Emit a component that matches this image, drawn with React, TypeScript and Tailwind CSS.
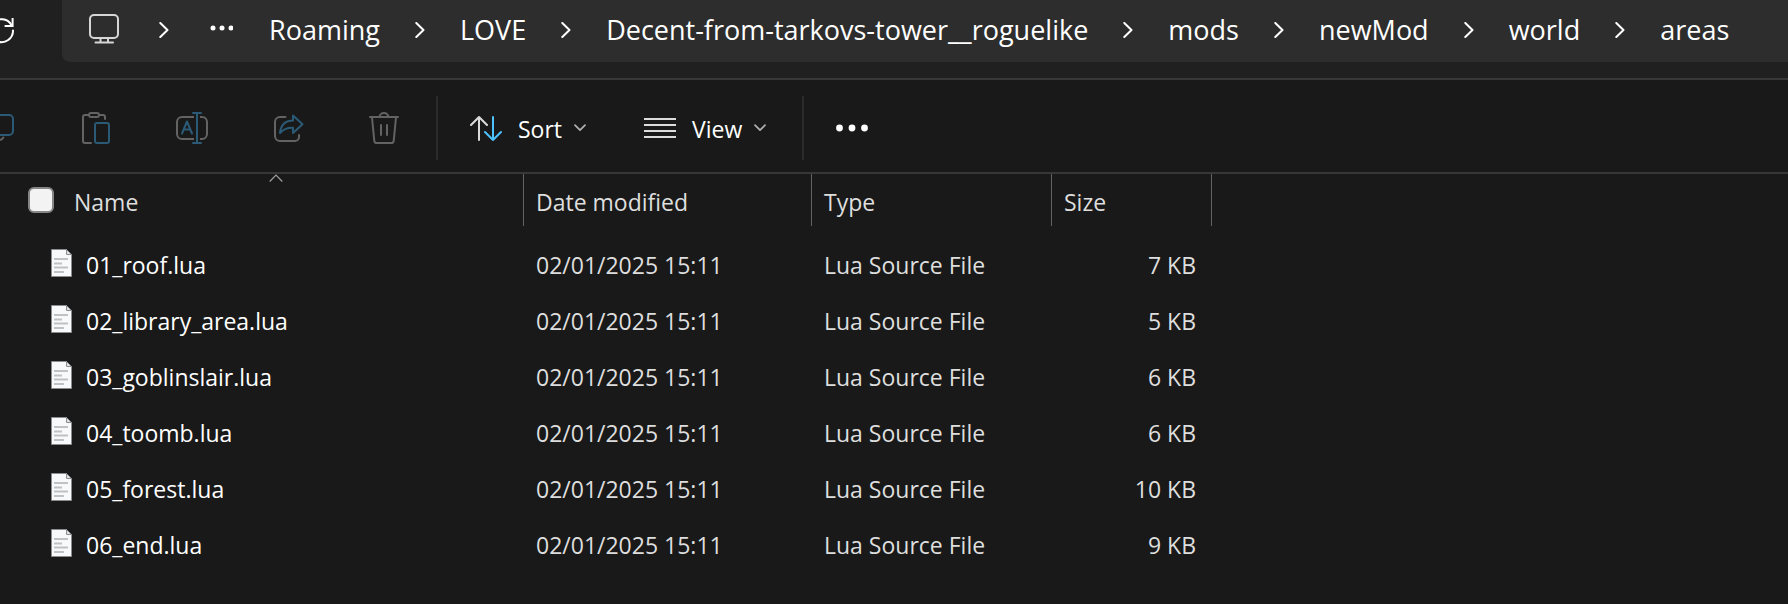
import React from "react";

type FileRow = { name: string; modified: string; type: string; size: string };

const files: FileRow[] = [
  { name: "01_roof.lua", modified: "02/01/2025 15:11", type: "Lua Source File", size: "7 KB" },
  { name: "02_library_area.lua", modified: "02/01/2025 15:11", type: "Lua Source File", size: "5 KB" },
  { name: "03_goblinslair.lua", modified: "02/01/2025 15:11", type: "Lua Source File", size: "6 KB" },
  { name: "04_toomb.lua", modified: "02/01/2025 15:11", type: "Lua Source File", size: "6 KB" },
  { name: "05_forest.lua", modified: "02/01/2025 15:11", type: "Lua Source File", size: "10 KB" },
  { name: "06_end.lua", modified: "02/01/2025 15:11", type: "Lua Source File", size: "9 KB" },
];

const crumbs = [
  "Roaming",
  "LOVE",
  "Decent-from-tarkovs-tower__roguelike",
  "mods",
  "newMod",
  "world",
  "areas",
];

const GREY = "#636363";
const BLUE = "#2b5a76";

function Icon({ children }: { children: React.ReactNode }) {
  return (
    <svg
      aria-hidden="true"
      className="size-8 shrink-0"
      viewBox="0 0 32 32"
      fill="none"
      strokeWidth="2"
      strokeLinecap="round"
      strokeLinejoin="round"
    >
      {children}
    </svg>
  );
}

function CrumbChevron() {
  return (
    <svg
      aria-hidden="true"
      className="h-4 w-2.5 shrink-0"
      viewBox="0 0 10 16"
      fill="none"
      stroke="#fff"
      strokeWidth="2"
      strokeLinecap="round"
      strokeLinejoin="round"
    >
      <path d="M1.3 1l7.2 7-7.2 7" />
    </svg>
  );
}

function DownChevron() {
  return (
    <svg
      aria-hidden="true"
      className="h-2 w-3 shrink-0"
      viewBox="0 0 12 8"
      fill="none"
      stroke="#b0b0b0"
      strokeWidth="1.7"
      strokeLinecap="round"
      strokeLinejoin="round"
    >
      <path d="M1 1.2l5 5 5-5" />
    </svg>
  );
}

function FileIcon() {
  return (
    <svg aria-hidden="true" className="h-7 w-[21px] shrink-0" viewBox="0 0 21 28" fill="none">
      <path d="M.5.5H15.5L20.5 5.5V27.5H.5z" fill="#f8f9fa" stroke="#8c8c8c" />
      <path d="M15.5.5V5.5H20.5z" fill="#dfe1e3" stroke="#8c8c8c" strokeLinejoin="round" />
      <path d="M3 10h14M3 14.5h8M3 18.500h14M3 23h10" stroke="#bfc1c4" strokeWidth="2" />
    </svg>
  );
}

export default function App() {
  return (
    <div className="min-h-screen overflow-hidden bg-[#191919] font-['Open_Sans','Noto_Sans',sans-serif] text-white">
      <header className="flex items-start overflow-hidden border-b-2 border-[#373737] bg-[#202020] pb-4">
        <button aria-label="Refresh" className="-ml-4 mt-3.5 mr-[46px] shrink-0">
          <Icon>
            <g stroke="#fff">
              <path d="M28.6 5v7h-7" strokeLinecap="square" strokeLinejoin="miter" />
              <path d="M27.500 11A11.500 11.500 0 1 0 29 16.500" />
            </g>
          </Icon>
        </button>
        <nav
          aria-label="Address"
          className="-mt-2 flex h-[70px] grow items-center rounded-l-lg bg-[#2d2d2d] pt-1.5 pl-[26px] text-[27px] leading-9"
        >
          <button aria-label="This PC">
            <Icon>
              <g stroke="#d6d6d6">
                <rect x="2" y="1" width="28" height="23" rx="4" />
                <path d="M7.500 28.500H25M12.500 24.500v4M20 24.500v4" />
              </g>
            </Icon>
          </button>
          <span className="ml-[39px] flex">
            <CrumbChevron />
          </span>
          <button aria-label="More folders" className="mr-9 ml-10">
            <svg className="h-5 w-6" viewBox="0 0 24 20" fill="#fff">
              <circle cx="4" cy="8" r="2.500" />
              <circle cx="13" cy="8" r="2.500" />
              <circle cx="22" cy="8" r="2.500" />
            </svg>
          </button>
          <ol className="flex items-center gap-[35px]">
            {crumbs.map((crumb, i) => (
              <li key={crumb} className="flex items-center gap-[35px]">
                {i > 0 && <CrumbChevron />}
                <button>{crumb}</button>
              </li>
            ))}
          </ol>
        </nav>
      </header>

      <div
        role="toolbar"
        aria-label="Commands"
        className="flex h-[94px] items-center border-b-2 border-[#373737] pt-1 text-[23px] leading-8"
      >
        <div className="-ml-4 flex shrink-0 gap-16">
          <button aria-label="Copy" disabled>
            <Icon>
              <rect x="8" y="3" width="21" height="20" rx="4" stroke={BLUE} />
              <path d="M4 9v14a5 5 0 0 0 5 5h6q3 0 4.300-2.500" stroke={GREY} />
            </Icon>
          </button>
          <button aria-label="Paste" disabled>
            <Icon>
              <g stroke={GREY}>
                <path d="M8.500 3H5a2 2 0 0 0-2 2v24a2 2 0 0 0 2 2h6M19.500 3H23a2 2 0 0 1 2 2v2" />
                <rect x="9" y="1" width="10" height="4" rx="2" />
              </g>
              <rect x="15" y="11" width="14" height="20" rx="2" stroke={BLUE} />
            </Icon>
          </button>
          <button aria-label="Rename" disabled>
            <Icon>
              <g stroke={GREY} strokeLinecap="butt">
                <path d="M18 5H6a5 5 0 0 0-5 5v12a5 5 0 0 0 5 5h12M24 5h2a5 5 0 0 1 5 5v12a5 5 0 0 1-5 5h-2" />
              </g>
              <g stroke={BLUE}>
                <path d="M21 1v30M17 1h8M17 31h8M6 21.500L11 9.500l5 12M7.700 17.500h6.600" />
              </g>
            </Icon>
          </button>
          <button aria-label="Share" disabled>
            <Icon>
              <path d="M13.500 5H8a5 5 0 0 0-5 5v14a5 5 0 0 0 5 5h15a4 4 0 0 0 4-4v-2" stroke={GREY} />
              <path d="M21 3.500L30.500 12.200 21 21V15.800C15 15.500 11 17.500 8 21 8.800 12.500 14 8.700 21 8.500z" stroke={BLUE} />
            </Icon>
          </button>
          <button aria-label="Delete" disabled>
            <Icon>
              <g stroke={GREY}>
                <path d="M2 5h28M11.500 5a4.500 4 0 0 1 9 0M4 5.500l2.300 23.300A2.500 2.500 0 0 0 8.800 31h14.400a2.500 2.500 0 0 0 2.500-2.200L28 5.500M13 13v10M19 13v10" />
              </g>
            </Icon>
          </button>
        </div>
        <div className="mr-8 ml-9 h-16 w-0.5 shrink-0 bg-[#2b2b2b]" />
        <button className="flex items-center">
          <Icon>
            <path d="M9 28V5M1 13l8-8 8 8" stroke="#dcdcdc" />
            <path d="M23 5v23M15 20l8 8 8-8" stroke="#4cc2ff" />
          </Icon>
          <span className="mr-3 ml-4 pt-0.5">Sort</span>
          <DownChevron />
        </button>
        <button className="ml-[58px] flex items-center">
          <Icon>
            <path d="M0 7h32M0 13h32M0 19h32M0 25h32" stroke="#dcdcdc" strokeLinecap="butt" />
          </Icon>
          <span className="mr-3 ml-4 pt-0.5">View</span>
          <DownChevron />
        </button>
        <div className="mr-8 ml-9 h-16 w-0.5 shrink-0 bg-[#2b2b2b]" />
        <button aria-label="See more">
          <Icon>
            <g fill="#fff">
              <circle cx="3.500" cy="16" r="3.400" />
              <circle cx="16" cy="16" r="3.400" />
              <circle cx="28.500" cy="16" r="3.400" />
            </g>
          </Icon>
        </button>
      </div>

      <table className="w-full table-fixed border-collapse text-left text-[23px] leading-8 text-[#dedede]">
        <colgroup>
          <col className="w-[524px]" />
          <col className="w-72" />
          <col className="w-60" />
          <col className="w-40" />
          <col />
        </colgroup>
        <thead>
          <tr>
            <th className="p-0 pb-[9px] font-normal">
              <div className="flex h-[52px] items-center border-r border-[#636363] pl-7">
                <div className="relative flex h-full grow items-center">
                  <input
                    type="checkbox"
                    aria-label="Select all"
                    className="size-[26px] appearance-none rounded-md border-2 border-[#868686] bg-[#f3f3f3]"
                  />
                  <button className="ml-5 pt-1">Name</button>
                  <svg
                    aria-hidden="true"
                    className="absolute top-0 left-1/2 h-2 w-3.5 -translate-x-1/2"
                    viewBox="0 0 14 8"
                    fill="none"
                    stroke="#a0a0a0"
                    strokeWidth="1.200"
                  >
                    <path d="M.7 7.500L7 1.200l6.300 6.300" />
                  </svg>
                </div>
              </div>
            </th>
            {["Date modified", "Type", "Size"].map((label) => (
              <th key={label} className="p-0 pb-[9px] font-normal">
                <div className="flex h-[52px] items-center border-r border-[#636363] pl-3">
                  <button className="pt-1">{label}</button>
                </div>
              </th>
            ))}
            <td />
          </tr>
        </thead>
        <tbody>
          {files.map((file) => (
            <tr key={file.name} className="h-14">
              <td className="p-0 pl-[51px] text-white">
                <div className="flex items-center">
                  <FileIcon />
                  <span className="ml-3.5 pt-1">{file.name}</span>
                </div>
              </td>
              <td className="p-0 pt-1 pl-3">{file.modified}</td>
              <td className="p-0 pt-1 pl-3">{file.type}</td>
              <td className="p-0 pt-1 pr-4 text-right">{file.size}</td>
              <td />
            </tr>
          ))}
        </tbody>
      </table>
    </div>
  );
}
